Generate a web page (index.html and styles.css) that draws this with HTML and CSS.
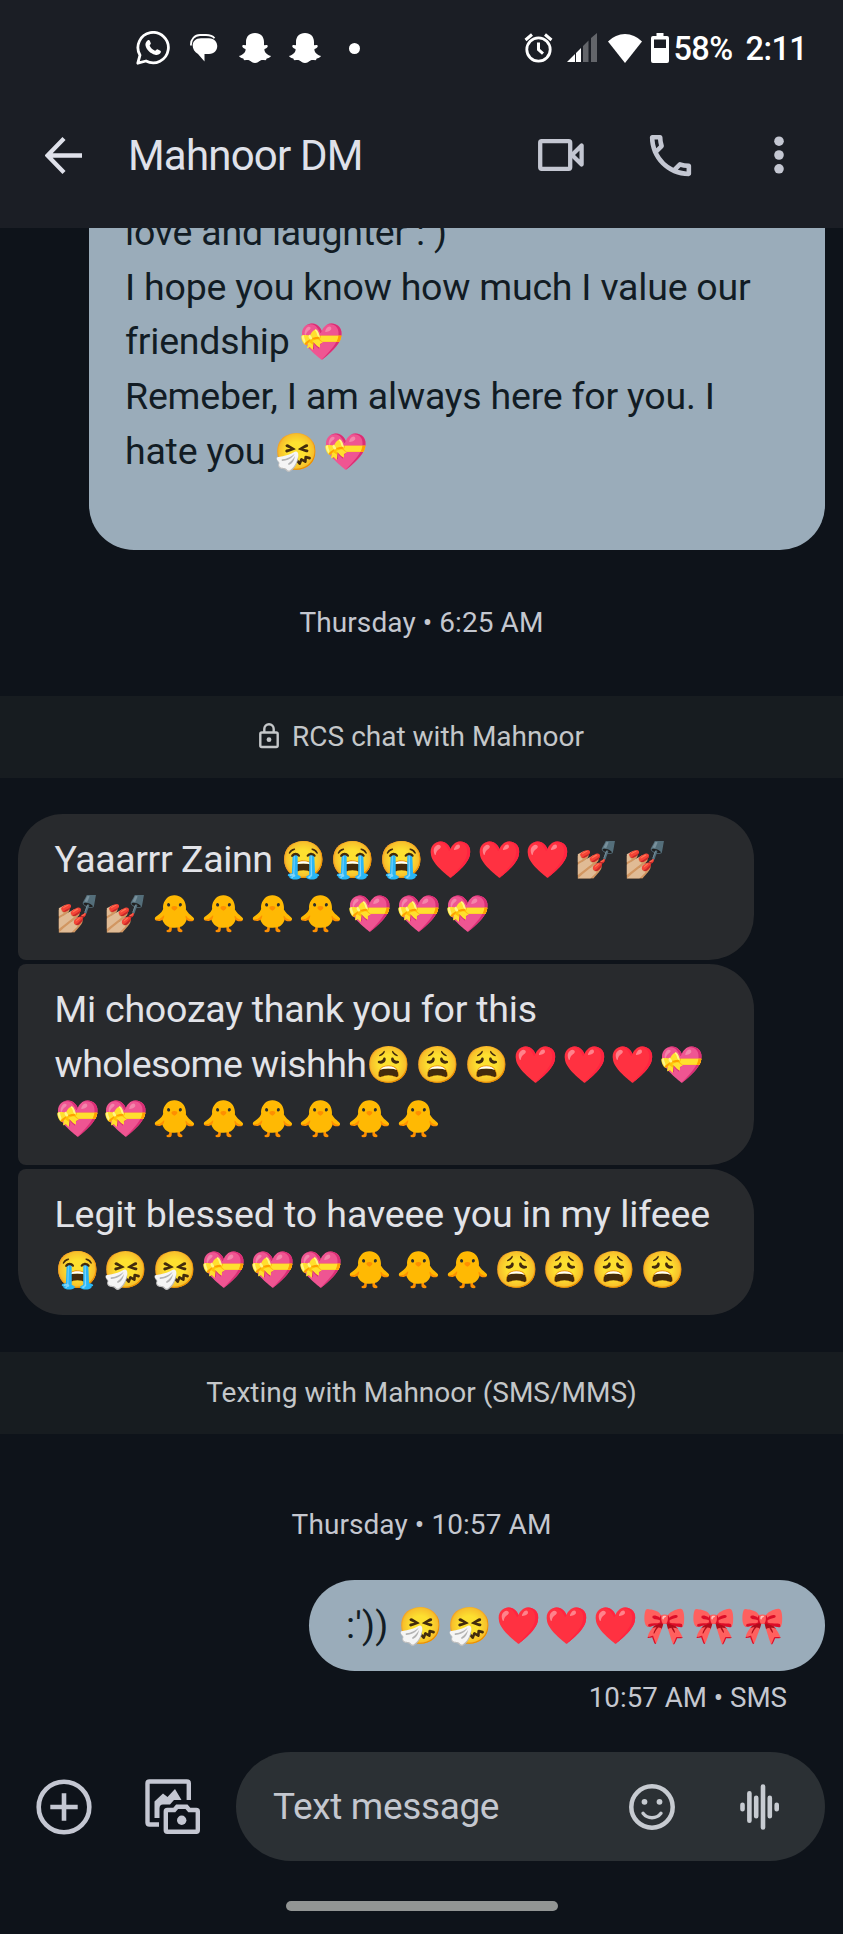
FILE: index.html
```html
<!DOCTYPE html>
<html lang="en">
<head>
<meta charset="utf-8">
<title>Mahnoor DM</title>
<link rel="stylesheet" href="styles.css">
</head>
<body>
<div class="screen">
  <div class="status">
    <svg class="i-wa" width="34" height="34" viewBox="0 0 34 34"><path d="M1.800 32.200 4 24.200A15.200 15.200 0 1 1 10 30z" fill="none" stroke="#fff" stroke-width="2.800" stroke-linejoin="round"/><path d="M11.500 9.500c.8-.8 2-.6 2.300.3l1 2.500c.3.800-1.300 2-1.100 2.500 1 2.200 2.900 4 5.300 5 .6.200 1.700-1.800 2.400-1.500l3 1.400c.9.500.500 2-.3 2.800-1.200 1.300-3.200 1.700-5 1.200-5-1.500-8.400-4.800-9.600-9.300-.4-1.800.6-3.600 2-4.900z" fill="#fff"/></svg>
    <svg class="i-chat" width="28" height="28" viewBox="0 0 28 28"><path d="M1 11.500C.5 5 5 1 10 1h6q6 0 8.500 3.200" fill="none" stroke="#fff" stroke-width="1.800"/><path d="M11 4.200h8c11 0 11 15.800 0 15.800H14.500v7.500L8 20C0 15.500 1 4.200 11 4.200z" fill="#fff"/></svg>
    <svg class="i-sn1" width="32" height="30" viewBox="0 0 32 30"><use href="#ghost"/></svg>
    <svg class="i-sn2" width="32" height="30" viewBox="0 0 32 30"><path id="ghost" d="M16 0c5.800 0 9 3.800 9 9v3c1.500.6 2.700-.5 3.500.5s-.5 2.500-3 3.500c-.5 2.500 2 5.500 6 6.800.8.500-.2 1.900-3.700 2.600-.8.700-.3 1.800-1.500 1.800-1.500 0-3-.6-4.800.2C19.800 28.300 18.200 30 16 30s-3.800-1.700-5.500-2.600c-1.800-.8-3.300-.2-4.800-.2-1.200 0-.7-1.100-1.500-1.800C.7 24.700-.3 23.300.5 22.800c4-1.300 6.500-4.300 6-6.800-2.500-1-3.800-2.500-3-3.500s2 .1 3.500-.5V9c0-5.200 3.200-9 9-9z" fill="#fff"/></svg>
    <span class="more-dot"></span>
    <svg class="i-alarm" width="29" height="30" viewBox="0 0 29 30" fill="none" stroke="#fff"><circle cx="14.500" cy="16.500" r="11.700" stroke-width="2.800"/><path d="M14.500 9.500v7.200l4.500 4" stroke-width="3"/><path d="M1.500 7 8 1.500M27.500 7 21 1.500" stroke-width="3"/></svg>
    <svg class="i-sig" width="30" height="30" viewBox="0 0 30 30"><path d="M0 29 8 21v8zM9 20l5-5v14H9z" fill="#fff"/><path d="M16 13l5.500-5.500V29H16zM24 5l6-5v29h-6z" fill="#63656a"/></svg>
    <svg class="i-wifi" width="34" height="29" viewBox="0 0 34 29"><path d="M0 7.500Q7.500 0 17 0t17 7.500L17 29z" fill="#fff"/></svg>
    <svg class="i-bat" width="18" height="30" viewBox="0 0 18 30"><path fill-rule="evenodd" d="M5.500 0h7v3H16q2 0 2 2v23q0 2-2 2H2q-2 0-2-2V5q0-2 2-2h3.500zM3 6.500V15h12V6.500z" fill="#fff"/></svg>
    <span class="pct">58%</span><span class="clock">2:11</span>
  </div>
  <div class="bar">
    <svg class="i-back" width="37" height="37" viewBox="0 0 37 37"><path d="M37 18.500H3M19 1.500 2.500 18.500 19 35.500" fill="none" stroke="#dfe1ea" stroke-width="4.300"/></svg>
    <h1 class="title">Mahnoor DM</h1>
    <svg class="i-video" width="46" height="32" viewBox="0 0 46 32" fill="none" stroke="#c4c7d2" stroke-width="4.300" stroke-linejoin="round"><rect x="2.200" y="2.200" width="30" height="27.600" rx="1.500"/><path d="M34 16 43.600 6.500V25.500z"/></svg>
    <svg class="i-phone" width="55" height="55" viewBox="0 0 24 24"><path fill="#c4c7d2" d="M6.540 5c.06.89.21 1.760.45 2.590l-1.200 1.200c-.41-1.200-.67-2.470-.76-3.790h1.510m9.860 12.020c.85.240 1.720.39 2.600.45v1.490c-1.320-.09-2.590-.35-3.800-.75l1.200-1.190M7.500 3H4c-.55 0-1 .45-1 1 0 9.390 7.610 17 17 17 .55 0 1-.45 1-1v-3.490c0-.55-.45-1-1-1-1.240 0-2.450-.2-3.570-.57a.84.840 0 0 0-.31-.05c-.26 0-.51.1-.71.290l-2.200 2.200a15.149 15.149 0 0 1-6.590-6.580l2.200-2.210c.28-.27.36-.66.250-1.010A11.360 11.360 0 0 1 8.500 4c0-.55-.45-1-1-1z"/></svg>
    <svg class="i-dots" width="10" height="38" viewBox="0 0 10 38" fill="#c4c7d2"><circle cx="5" cy="5.200" r="4.800"/><circle cx="5" cy="19" r="4.800"/><circle cx="5" cy="32.800" r="4.800"/></svg>
  </div>
  <main class="thread">
    <div class="msg out first"><p>love and laughter : )</p><p>I hope you know how much I value our</p><p>friendship <span class="e">💝</span></p><p>Remeber, I am always here for you. I</p><p>hate you <span class="e">🤧</span><span class="e">💝</span></p></div>
    <div class="date d1">Thursday • 6:25 AM</div>
    <div class="banner b1"><svg width="20" height="26" viewBox="0 0 20 26"><rect x="1.300" y="9.500" width="17.400" height="14.500" rx="1.500" fill="none" stroke="#c4c7c9" stroke-width="2.400"/><path d="M5.300 9V6a4.700 4.700 0 0 1 9.400 0v3" fill="none" stroke="#c4c7c9" stroke-width="2.400"/><circle cx="10" cy="16.700" r="2.400" fill="#c4c7c9"/></svg><span>RCS chat with Mahnoor</span></div>
    <div class="group">
      <div class="msg in top"><p class="t3">Yaaarrr Zainn <span class="e">😭</span><span class="e">😭</span><span class="e">😭</span><span class="e h">❤️</span><span class="e h">❤️</span><span class="e h">❤️</span><span class="e">💅🏼</span><span class="e">💅🏼</span></p><p><span class="e">💅🏼</span><span class="e">💅🏼</span><span class="e">🐥</span><span class="e">🐥</span><span class="e">🐥</span><span class="e">🐥</span><span class="e">💝</span><span class="e">💝</span><span class="e">💝</span></p></div>
      <div class="msg in mid"><p>Mi choozay thank you for this</p><p class="t5">wholesome wishhh<span class="e">😩</span><span class="e">😩</span><span class="e">😩</span><span class="e h">❤️</span><span class="e h">❤️</span><span class="e h">❤️</span><span class="e">💝</span></p><p><span class="e">💝</span><span class="e">💝</span><span class="e">🐥</span><span class="e">🐥</span><span class="e">🐥</span><span class="e">🐥</span><span class="e">🐥</span><span class="e">🐥</span></p></div>
      <div class="msg in end"><p class="t1">Legit blessed to haveee you in my lifeee</p><p><span class="e">😭</span><span class="e">🤧</span><span class="e">🤧</span><span class="e">💝</span><span class="e">💝</span><span class="e">💝</span><span class="e">🐥</span><span class="e">🐥</span><span class="e">🐥</span><span class="e">😩</span><span class="e">😩</span><span class="e">😩</span><span class="e">😩</span></p></div>
    </div>
    <div class="banner b2"><span>Texting with Mahnoor (SMS/MMS)</span></div>
    <div class="date d2">Thursday • 10:57 AM</div>
    <div class="msg out last"><p class="t0">:')) <span class="e">🤧</span><span class="e">🤧</span><span class="e h">❤️</span><span class="e h">❤️</span><span class="e h">❤️</span><span class="e">🎀</span><span class="e">🎀</span><span class="e">🎀</span></p></div>
    <div class="meta">10:57 AM • SMS</div>
  </main>
  <div class="compose">
    <svg class="i-plus" width="56" height="56" viewBox="0 0 56 56" fill="none" stroke="#c4c7d2" stroke-width="4.600"><circle cx="28" cy="28" r="25.300"/><path d="M28 14.300v27.400M14.300 28h27.400"/></svg>
    <svg class="i-media" width="56" height="56" viewBox="0 0 56 56"><path d="M43.800 21V4.500q0-2-2-2H4.500q-2 0-2 2v39q0 2 2 2H14" fill="none" stroke="#c4c7d2" stroke-width="4.400"/><path d="M9.500 39V22.500l8.500-8 4.500 3.500L30 10l6.500 11H29l-4 4.500h-7q-3.500 0-3.500 4V39z" fill="#c4c7d2"/><path d="M20.800 32.500q0-1.500 1.500-1.500h7l2.800-3.200h9.400l2.800 3.200h7q1.500 0 1.500 1.500v18.800q0 1.500-1.500 1.500h-29q-1.500 0-1.500-1.500z" fill="none" stroke="#c4c7d2" stroke-width="4.400"/><circle cx="36.700" cy="41.200" r="4.700" fill="#c4c7d2"/></svg>
    <div class="field">
      <span class="ph">Text message</span>
      <svg class="i-smile" width="46" height="46" viewBox="0 0 46 46" fill="none" stroke="#c7cbd1"><circle cx="23" cy="23" r="20.700" stroke-width="4.500"/><path d="M14 29.300q3.500 4.500 9 4.500t9-4.500" stroke-width="3.400" stroke-linecap="round"/><circle cx="15.500" cy="17.800" r="2.900" fill="#c7cbd1" stroke="none"/><circle cx="30.500" cy="17.800" r="2.900" fill="#c7cbd1" stroke="none"/></svg>
      <svg class="i-wave" width="40" height="46" viewBox="0 0 40 46" fill="none" stroke="#c7cbd1" stroke-width="4.600" stroke-linecap="round"><path d="M2.500 20.800v4.400M9.400 9.300v27.400M16.200 13.800v18.400M23 2.500v41M29.800 13.800v18.400M36.700 20.800v4.400"/></svg>
    </div>
  </div>
  <div class="home"></div>
</div>
</body>
</html>
```

FILE: styles.css
```css
*{box-sizing:border-box}
body{margin:0;background:#0e131a;font-family:Roboto,"Liberation Sans",sans-serif}
.screen{width:843px;height:1934px;display:flex;flex-direction:column;overflow:hidden;background:#0e131a}
svg{display:block;flex:none}

/* Status bar */
.status{height:96px;background:#1b1e25;display:flex;align-items:center;color:#fff;font-weight:500;font-size:32.500px;white-space:nowrap;flex:none}
.i-wa{margin-left:136px}
.i-chat{margin-left:20px}
.i-sn1{margin-left:20.500px}
.i-sn2{margin-left:18px}
.more-dot{width:11px;height:11px;border-radius:50%;background:#fff;margin-left:28.500px}
.i-alarm{margin-left:164px}
.i-sig{margin-left:14px}
.i-wifi{margin-left:10.500px}
.i-bat{margin-left:9px}
.pct{margin-left:5px;letter-spacing:-.6px;padding-top:2px}
.clock{margin-left:13px;letter-spacing:-.6px;padding-top:2px}

/* App bar */
.bar{height:132px;background:#1b1e25;display:flex;align-items:center;padding-bottom:14px;flex:none}
.i-back{margin-left:45px}
.title{margin:0 0 0 46px;width:410px;font-size:42px;font-weight:400;color:#dfe1ea;letter-spacing:-.8px}
.i-phone{margin-left:59px}
.i-dots{margin-left:76px}

/* Thread */
.thread{display:flex;flex-direction:column;overflow:hidden;flex:none;height:1508px}
.msg{font-size:37.500px;line-height:54.600px;letter-spacing:-.22px;flex:none;white-space:nowrap}
.msg p{margin:0;height:54.600px}
.msg .t0{letter-spacing:.2px}
.msg .t1{letter-spacing:-.1px}
.msg .t3{letter-spacing:-.4px}
.msg .t5{letter-spacing:-.55px}
.e{display:inline-block;width:48.800px;font-size:36px;letter-spacing:0}
.h{filter:hue-rotate(-8deg) saturate(1.4) brightness(1.04)}
.out{background:#9aacba;color:#121c24;align-self:flex-end;margin-right:18px;padding:18px 37px}
.first{width:736.500px;height:322px;border-radius:0 0 45px 45px;padding:0 36.500px}
.first p:first-child{margin-top:-22.800px}
.date{text-align:center;color:#c4c7cf;font-size:28px;line-height:34px;letter-spacing:.08px}
.d1{margin-top:56px}
.banner{height:82px;margin-top:56px;background:#171c20;color:#c4c7c9;display:flex;align-items:center;justify-content:center;gap:13px;font-size:28px;flex:none}
.b1{padding-bottom:2px}
.group{margin:36px 0 0 18px;display:flex;flex-direction:column;gap:4.500px;width:736px}
.in{background:#282a2d;color:#e2e3e8;padding:17.900px 37px 18.700px 36.500px;border-radius:8px 45px 45px 8px}
.top{border-top-left-radius:45px}
.end{border-bottom-left-radius:45px}
.b2{margin-top:37px}
.d2{margin-top:74px}
.last{width:516px;height:91px;border-radius:46px;margin-top:38px}
.meta{text-align:right;padding-right:56px;font-size:27.700px;color:#c4c7cf;margin-top:10.500px}

/* Composer */
.compose{height:141px;padding:16px 18px 16px 35.500px;display:flex;align-items:center;flex:none}
.i-media{margin-left:53.500px}
.field{margin-left:35px;flex:1;height:109px;border-radius:55px;background:#2b3034;color:#c4c7cf;font-size:37px;display:flex;align-items:center;padding:0 45px 0 37px}
.ph{flex:1;letter-spacing:-.35px}
.i-wave{margin-left:65.500px}
.home{width:272px;height:10px;border-radius:5px;background:#929594;margin:24px 0 0 285.500px}
```
